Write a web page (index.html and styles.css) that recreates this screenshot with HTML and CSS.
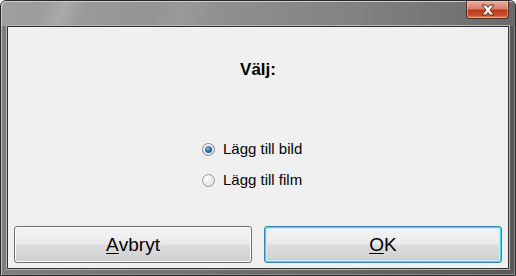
FILE: index.html
```html
<!DOCTYPE html>
<html lang="sv">
<head>
<meta charset="utf-8">
<title>Välj</title>
<link rel="stylesheet" href="styles.css">
</head>
<body>
<div class="window">
  <div class="titlebar">
    <div class="close">
      <svg width="18" height="12" viewBox="0 0 18 12">
        <path d="M3 1 L7 1 L9 3.5 L11 1 L15 1 L11 6 L15 11 L11 11 L9 8.5 L7 11 L3 11 L7 6 Z" fill="#ffffff" stroke="#5b2c22" stroke-width="1" stroke-linejoin="round"/>
      </svg>
    </div>
  </div>
  <div class="client">
    <div class="heading">Välj:</div>
    <div class="options">
      <label class="option"><span class="radio checked"></span><span>Lägg till bild</span></label>
      <label class="option"><span class="radio"></span><span>Lägg till film</span></label>
    </div>
    <div class="buttons">
      <div class="btn"><span class="ul">A</span>vbryt</div>
      <div class="btn default"><span class="ul">O</span>K</div>
    </div>
  </div>
</div>
</body>
</html>
```
FILE: styles.css
```css
html, body {
  margin: 0;
  padding: 0;
  background: #ffffff;
}
body {
  width: 516px;
  height: 276px;
  font-family: "Liberation Sans", Arial, sans-serif;
}
.window {
  box-sizing: border-box;
  width: 516px;
  height: 276px;
  border: 1px solid #2a2a2a;
  border-radius: 6px 6px 0 0;
  background: linear-gradient(90deg, #7e7e7e 0%, #6c6c6c 50%, #585858 100%);
  padding: 0 6px 6px 6px;
  display: flex;
  flex-direction: column;
  box-shadow: inset 1px 1px 0 #bdbdbd, inset -1px -1px 0 #8a8a8a;
}
.titlebar {
  height: 25px;
  flex: none;
  display: flex;
  justify-content: flex-end;
  margin: 0 -6px;
  padding-right: 6px;
  border-radius: 5px 5px 0 0;
  background:
    linear-gradient(115deg, rgba(255,255,255,0) 0px, rgba(255,255,255,0) 40px, rgba(255,255,255,0.16) 60px, rgba(255,255,255,0) 80px, rgba(255,255,255,0) 140px, rgba(255,255,255,0.07) 170px, rgba(255,255,255,0) 200px),
    linear-gradient(90deg, #9e9e9e 0%, #919191 40%, #818181 70%, #6a6a6a 100%);
  box-shadow: inset 1px 1px 0 #cacaca;
}
.close {
  width: 43px;
  height: 18px;
  box-sizing: border-box;
  border: 1px solid #5a2b22;
  border-top: none;
  border-radius: 0 0 4px 4px;
  background: linear-gradient(180deg, #e7b09f 0%, #d8806a 45%, #c0391c 55%, #c9512c 85%, #e0906c 100%);
  box-shadow: inset 0 0 0 1px rgba(255,220,200,0.45);
  display: flex;
  align-items: center;
  justify-content: center;
}
.close svg {
  display: block;
}
.client {
  flex: 1;
  background: #f0f0f0;
  border: 1px solid #333333;
  box-shadow: 0 0 0 1px #b5b5b5;
  display: flex;
  flex-direction: column;
  align-items: stretch;
}
.heading {
  margin-top: 33px;
  text-align: center;
  font-weight: bold;
  font-size: 17px;
  line-height: 20px;
  color: #000000;
}
.options {
  margin-top: 60px;
  display: flex;
  flex-direction: column;
  align-items: center;
  gap: 13px;
  padding-right: 8px;
}
.option {
  display: flex;
  align-items: center;
  gap: 8px;
  font-size: 15px;
  line-height: 18px;
  color: #000000;
  width: 104px;
}
.radio {
  box-sizing: border-box;
  width: 13px;
  height: 13px;
  border-radius: 50%;
  border: 1px solid #9a9a9a;
  background: radial-gradient(circle at 35% 30%, #ffffff 0%, #e6e6e6 60%, #cfcfcf 100%);
  position: relative;
  flex: none;
}
.radio.checked {
  border-color: #7f8b96;
}
.radio.checked::after {
  content: "";
  position: absolute;
  left: 2px;
  top: 2px;
  width: 7px;
  height: 7px;
  border-radius: 50%;
  background: radial-gradient(circle at 40% 35%, #8ec3ea 0%, #2f6fa8 45%, #16406a 100%);
}
.buttons {
  margin-top: auto;
  padding: 0 6px 5px 6px;
  display: flex;
  gap: 12px;
}
.btn {
  flex: 1;
  height: 37px;
  box-sizing: border-box;
  border: 1px solid #707070;
  border-radius: 3px;
  background: linear-gradient(180deg, #f3f3f3 0%, #ebebeb 48%, #dddddd 52%, #cfcfcf 100%);
  box-shadow: inset 0 0 0 1px #fcfcfc;
  display: flex;
  align-items: center;
  justify-content: center;
  font-size: 19px;
  color: #000000;
  padding-top: 1px;
}
.btn.default {
  border-color: #3c7fb1;
  box-shadow: inset 0 0 0 1px #48d8fb, inset 0 0 0 2px #c0ecfb;
}
.ul {
  text-decoration: underline;
  text-underline-offset: 2px;
}
```
